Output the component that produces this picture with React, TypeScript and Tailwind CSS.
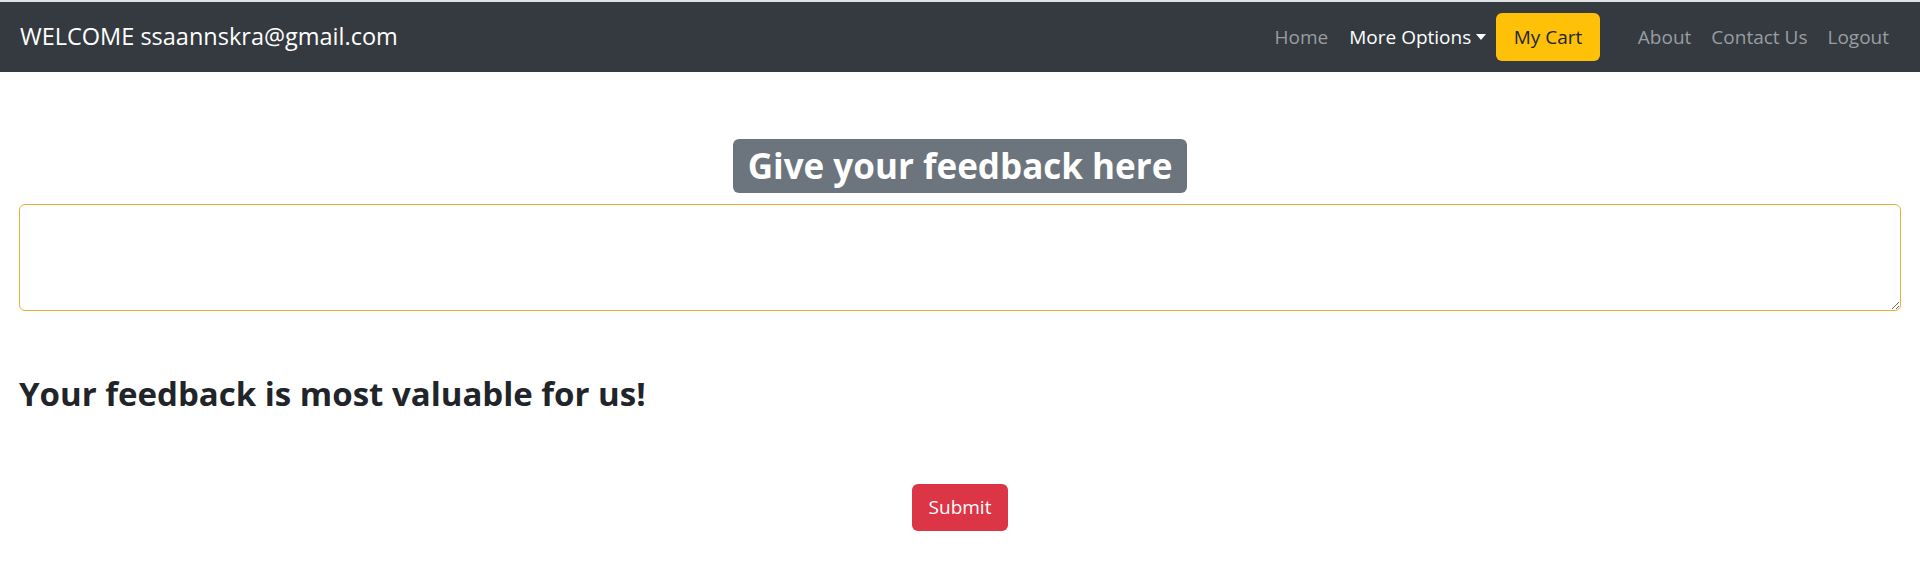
import React, { useState } from 'react';

const navLinks = ['About', 'Contact Us', 'Logout'];

const Navbar: React.FC<{ email: string }> = ({ email }) => {
  return (
    <nav className="flex h-[70px] items-center justify-between bg-[#343a40] pl-[20px] pr-[21px]">
      <span className="text-[23.5px] text-white">WELCOME {email}</span>

      <div className="flex items-center text-[19px]">
        <a className="px-[10.5px] text-[#9a9da0]" href="#">Home</a>
        <button className="flex items-center pl-[10.5px] pr-[10px] text-white">
          More Options
          <span className="ml-[5px] inline-block h-0 w-0 border-x-[5px] border-t-[6px] border-x-transparent border-t-white" />
        </button>
        <button className="h-[48px] rounded-md bg-[#ffc107] px-[17.5px] text-[19px] text-[#212529]">My Cart</button>
        <div className="ml-[28px] flex">
          {navLinks.map((link) => (
            <a key={link} className="px-[10px] text-[#9a9da0]" href="#">
              {link}
            </a>
          ))}
        </div>
      </div>
    </nav>
  );
};

const App: React.FC = () => {
  const [feedback, setFeedback] = useState('');

  const handleChange = (event: React.ChangeEvent<HTMLTextAreaElement>) => {
    setFeedback(event.target.value);
  };

  return (
    <div className="min-h-[567px] bg-white" style={{ fontFamily: '"Open Sans", "Noto Sans", sans-serif' }}>
      <div className="h-[2px] bg-[#dee2e6]" />
      <Navbar email="ssaannskra@gmail.com" />

      <main className="px-[19px]">
        <div className="mt-[67px] flex justify-center">
          <h1 className="rounded-md bg-[#6c757d] px-[15px] text-[35px] font-bold leading-[54px] text-white">
            Give your feedback here
          </h1>
        </div>

        <textarea
          className="mt-[11px] block h-[107px] w-full rounded-md border border-[#ebae35] px-3 py-2 outline-none"
          value={feedback}
          onChange={handleChange}
        />

        <h2 className="mt-[63px] text-[33px] font-bold leading-[40px] text-[#212529]">
          Your feedback is most valuable for us!
        </h2>

        <div className="mt-[70px] flex justify-center">
          <button className="h-[47px] rounded-md bg-[#dc3545] px-[17px] text-[19px] text-white">Submit</button>
        </div>
      </main>
    </div>
  );
};

export default App;
